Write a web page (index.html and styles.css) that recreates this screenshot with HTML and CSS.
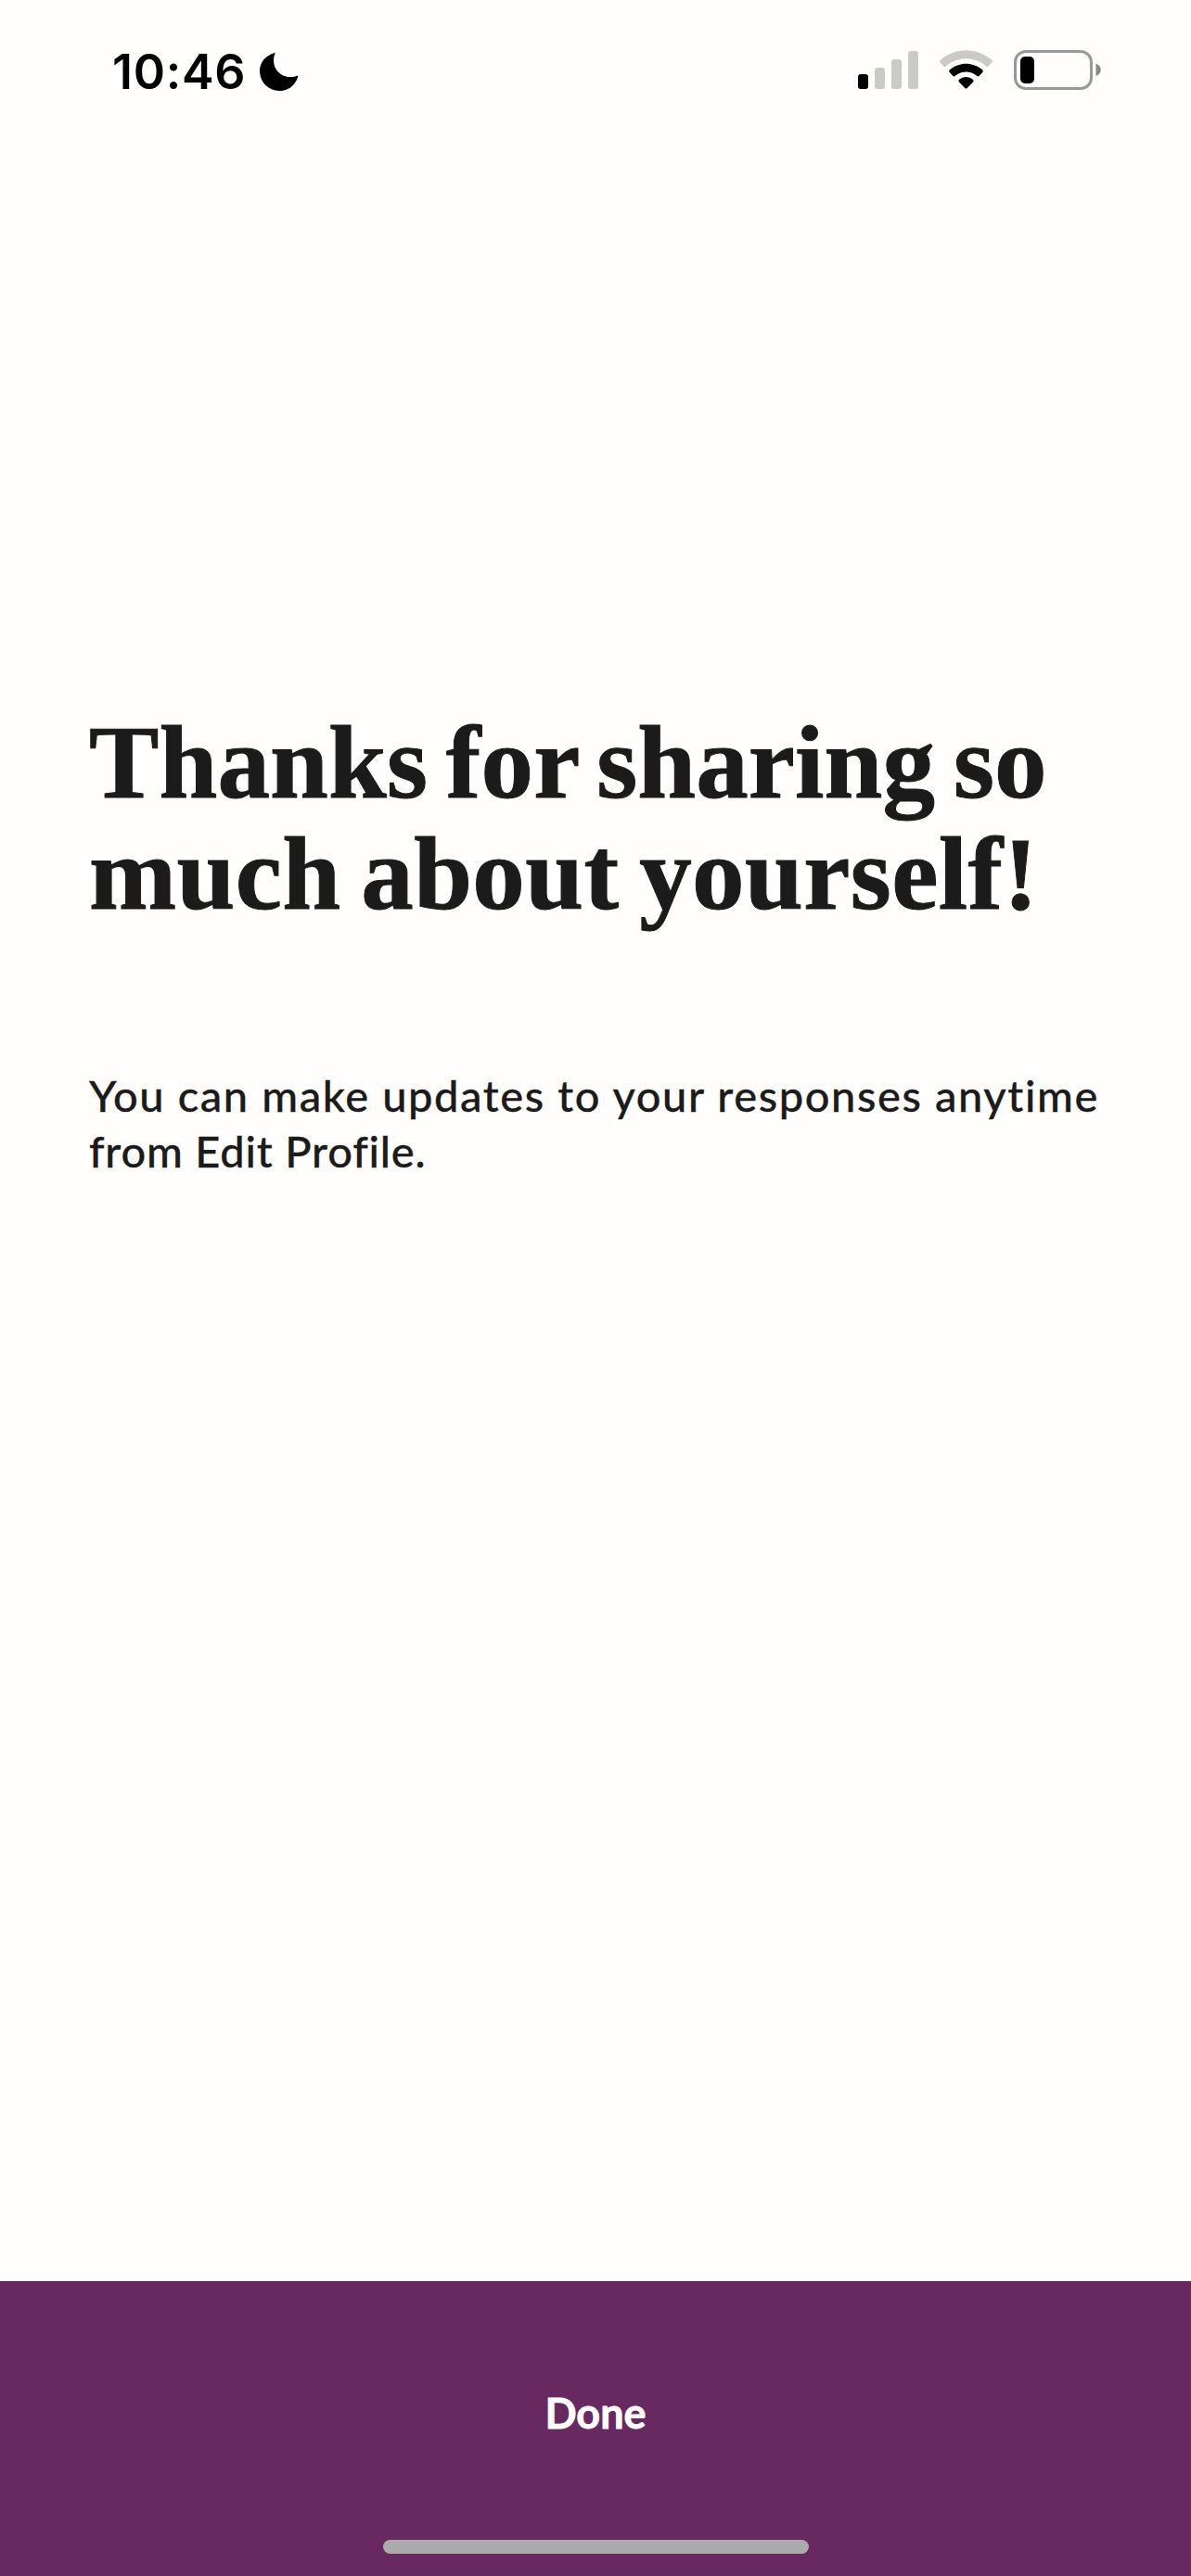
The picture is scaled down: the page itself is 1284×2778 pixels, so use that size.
FILE: index.html
```html
<!DOCTYPE html>
<html lang="en">
<head>
<meta charset="utf-8">
<title>Thanks for sharing</title>
<link rel="stylesheet" href="styles.css">
</head>
<body>
<div class="screen">
  <header class="status">
    <span class="time">10:46</span>
    <svg class="moon" viewBox="0 0 42 42"><path d="M15.500 1.200C17 .1 16.500 1.500 16 3C11.500 17.500 23.500 30.500 39 26.200C40.500 25.600 41.800 25.600 41 27.500C37.800 36.500 30.500 42 21.500 42C9.500 42 0 32.500 0 20.600C0 11.500 6 4 15.500 1.200Z"/></svg>
    <svg class="icons" viewBox="0 0 264 46">
      <rect x="0" y="27" width="11" height="16" rx="3"/>
      <g fill="#cacac9">
        <rect x="18" y="20" width="11" height="23" rx="3"/>
        <rect x="36" y="11" width="11" height="32" rx="3"/>
        <rect x="54" y="2" width="11" height="41" rx="3"/>
        <path d="M88.600 14.300Q87.500 13 88.800 11.800C104.500-2.400 128.500-2.400 144.200 11.800Q145.500 13 144.400 14.300L140.800 18.300Q139.600 19.600 138.200 18.400C125.900 7.500 107.100 7.500 94.800 18.400Q93.400 19.600 92.200 18.300Z"/>
      </g>
      <path d="M98.700 25Q97.400 23.600 98.900 22.300C108.800 13.400 124.200 13.400 134.100 22.300Q135.600 23.600 134.300 25L130.800 28.700Q129.500 30 128.100 28.800C121.400 23 111.600 23 104.900 28.800Q103.500 30 102.200 28.700Z"/>
      <path d="M109 35.500Q107.500 34 109.200 32.700C113.500 29.100 119.500 29.100 123.800 32.700Q125.500 34 124 35.500L117.700 41.900Q116.500 43.100 115.300 41.900Z"/>
      <rect x="169.500" y="2.500" width="82" height="40" rx="11.500" fill="none" stroke="#999998" stroke-width="3"/>
      <rect x="175" y="8" width="15" height="29" rx="5"/>
      <path d="M256.500 15.500C263.500 18 263.500 26.500 256.500 29Z" fill="#888"/>
    </svg>
  </header>
  <main class="content">
    <h1 class="title"><span class="line first">Thanks for sharing so</span><span class="line second">much about yourself!</span></h1>
    <p class="note"><span class="line note-first">You can make updates to your responses anytime</span><span class="line note-second">from Edit Profile.</span></p>
  </main>
  <footer class="footer">
    <button class="done">Done</button>
    <div class="home"></div>
  </footer>
</div>
</body>
</html>
```
FILE: styles.css
```css
* { box-sizing: border-box; }
body { margin: 0; background: #fffefc; }
.screen { width: 1284px; height: 2778px; display: flex; flex-direction: column; color: #1b1b1b; overflow: hidden; }
.status { height: 150px; padding: 44px 95px 0 121px; display: flex; align-items: flex-start; color: #000; }
.time { width: 159px; padding-top: 1px; font: 600 52px/66px Inter, sans-serif; letter-spacing: 0.7px; white-space: nowrap; }
.moon { width: 42px; height: 42px; margin-top: 12px; }
.icons { width: 264px; height: 46px; margin: 9px 0 0 auto; }
.content { flex: 1; padding: 612px 96px 0; }
.line { display: block; white-space: nowrap; }
.title { margin: 0; font: 700 113px/120px "Liberation Serif", serif; -webkit-text-stroke: 1px #1b1b1b; }
.first { letter-spacing: 0.1px; word-spacing: -8.5px; }
.second { letter-spacing: 0.4px; word-spacing: -7px; }
.note { margin: 149px 0 0; font: 500 47px/60px Lato, sans-serif; -webkit-text-stroke: 0.3px #1b1b1b; }
.note-first { letter-spacing: 1.6px; }
.note-second { letter-spacing: 0.8px; }
.footer { height: 318px; background: #672960; display: flex; flex-direction: column; align-items: center; justify-content: space-between; padding: 112px 0 24px; }
.done { padding: 0; border: 0; background: none; color: #fffefc; font: 700 45px/60px Lato, sans-serif; -webkit-text-stroke: 0.8px #fffefc; }
.home { width: 459px; height: 15px; border-radius: 8px; background: #ababab; }
```
